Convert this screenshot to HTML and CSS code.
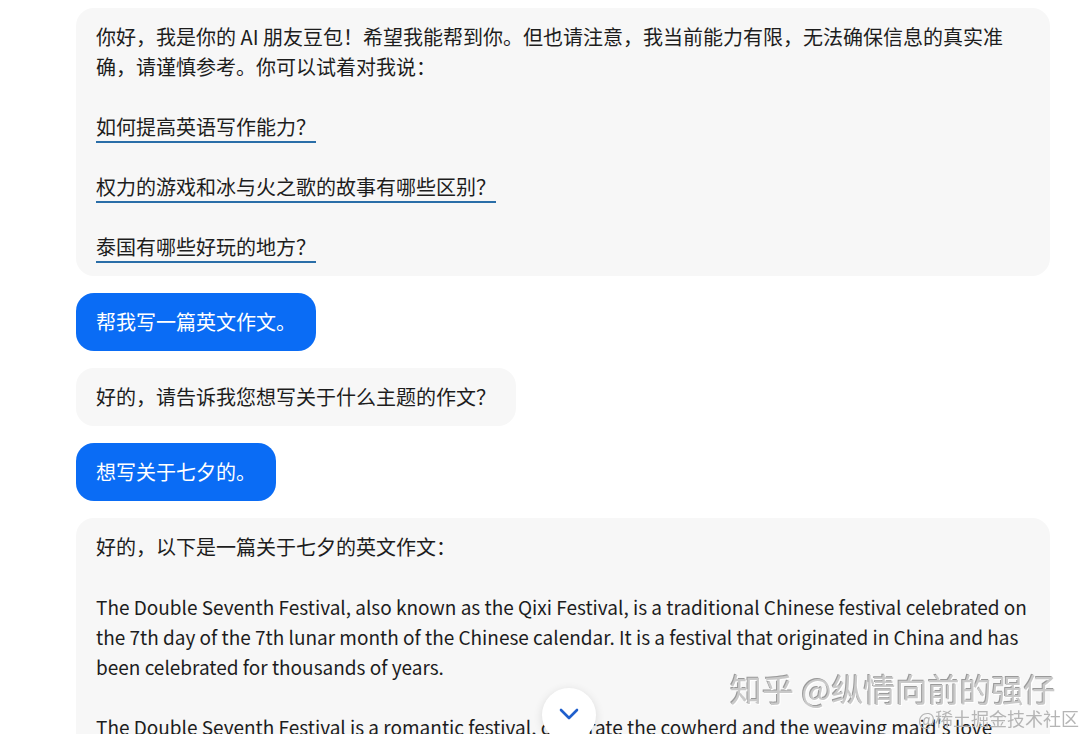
FILE: index.html
```html
<!DOCTYPE html>
<html lang="zh-CN">
<head>
  <meta charset="UTF-8" />
  <meta name="viewport" content="width=device-width, initial-scale=1" />
  <title>豆包</title>
  <link rel="stylesheet" href="styles.css">
</head>
<body>
  <main class="chat">
    <div class="msg bot">
      <p>你好，我是你的 AI 朋友豆包！希望我能帮到你。但也请注意，我当前能力有限，无法确保信息的真实准确，请谨慎参考。你可以试着对我说：</p>
      <p><a class="suggest">如何提高英语写作能力？</a></p>
      <p><a class="suggest">权力的游戏和冰与火之歌的故事有哪些区别？</a></p>
      <p><a class="suggest">泰国有哪些好玩的地方？</a></p>
    </div>

    <div class="msg user">帮我写一篇英文作文。</div>

    <div class="msg bot">好的，请告诉我您想写关于什么主题的作文？</div>

    <div class="msg user">想写关于七夕的。</div>

    <div class="msg bot wide">
      <p>好的，以下是一篇关于七夕的英文作文：</p>
      <p class="en">The Double Seventh Festival, also known as the Qixi Festival, is a traditional Chinese festival celebrated on the 7th day of the 7th lunar month of the Chinese calendar. It is a festival that originated in China and has been celebrated for thousands of years.</p>
      <p class="en">The Double Seventh Festival is a romantic festival, celebrate the cowherd and the weaving maid's love story.</p>
    </div>
  </main>

  <button class="scroll-down" aria-label="scroll down">
    <svg width="22" height="14" viewBox="0 0 22 14"><path d="M3 3 L11 11 L19 3" fill="none" stroke="#1f5fcc" stroke-width="2.6" stroke-linecap="round" stroke-linejoin="round"/></svg>
  </button>

  <div class="watermark">知乎 @纵情向前的强仔</div>
  <div class="watermark-small">@稀土掘金技术社区</div>
</body>
</html>
```

FILE: styles.css
```css
html, body {
  height: 100%;
}
body {
  margin: 0;
  overflow: hidden;
  background: #fff;
  color: #1d1d1d;
  font-family: "Noto Sans CJK SC", "Noto Sans", sans-serif;
  font-size: 20px;
  line-height: 30px;
}
.chat {
  width: 974px;
  padding: 8px 0 0 76px;
  display: flex;
  flex-direction: column;
  align-items: flex-start;
  gap: 17px;
}
.msg {
  padding: 14px 20px;
  border-radius: 18px;
}
.msg p {
  margin: 0;
}
.msg p + p {
  margin-top: 30px;
}
.msg p.en + p.en {
  margin-top: 30px;
}
.en {
  font-size: 19px;
}
.bot {
  background: #f7f7f7;
}
.bot:first-child,
.wide {
  align-self: stretch;
}
.user {
  background: #0a6cf5;
  color: #fff;
}
.suggest {
  color: #1d1d1d;
  border-bottom: 2px solid #2a6ea8;
  cursor: pointer;
}
.scroll-down {
  position: fixed;
  left: 542px;
  top: 688px;
  width: 54px;
  height: 54px;
  border-radius: 50%;
  border: none;
  background: #fff;
  box-shadow: 0 2px 10px rgba(0,0,0,0.12);
  display: flex;
  align-items: center;
  justify-content: center;
  padding: 0;
  cursor: pointer;
}
.scroll-down svg {
  margin-top: -2px;
}
.watermark {
  position: fixed;
  left: 730px;
  top: 668px;
  font-size: 32px;
  line-height: 40px;
  color: #c9c9c9;
  text-shadow: 1px 1px 0 #fff, -1px -1px 0 #9a9a9a;
  white-space: nowrap;
  pointer-events: none;
}
.watermark-small {
  position: fixed;
  left: 918px;
  top: 706px;
  font-size: 18px;
  line-height: 24px;
  color: #b5b5b5;
  white-space: nowrap;
  pointer-events: none;
}
```
